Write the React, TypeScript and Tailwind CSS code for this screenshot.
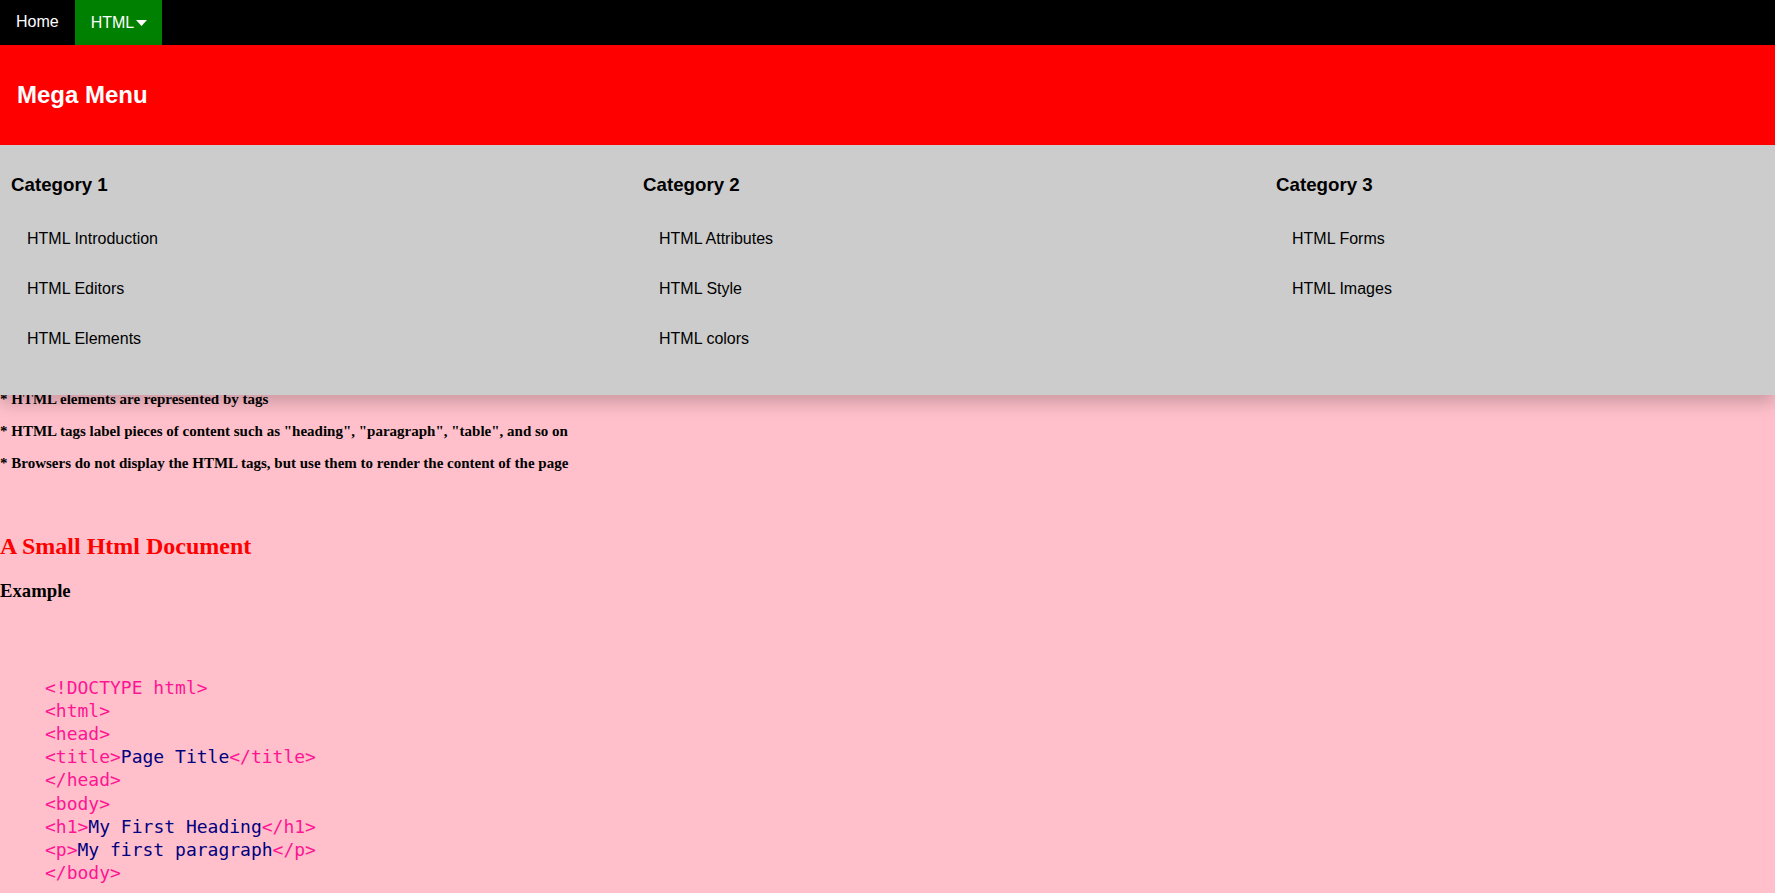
import React from "react";

// ============================================================================
// 数据
// ============================================================================

const CATEGORIES = [
  { id: 1, title: "Category 1", links: ["HTML Introduction", "HTML Editors", "HTML Elements"] },
  { id: 2, title: "Category 2", links: ["HTML Attributes", "HTML Style", "HTML colors"] },
  { id: 3, title: "Category 3", links: ["HTML Forms", "HTML Images"] },
];

const NOTES = [
  "* HTML elements are represented by tags",
  '* HTML tags label pieces of content such as "heading", "paragraph", "table", and so on',
  "* Browsers do not display the HTML tags, but use them to render the content of the page",
];

// 代码示例：[标签, 文本, 结束标签]
const CODE: [string, string?, string?][] = [
  ["<!DOCTYPE html>"],
  ["<html>"],
  ["<head>"],
  ["<title>", "Page Title", "</title>"],
  ["</head>"],
  ["<body>"],
  ["<h1>", "My First Heading", "</h1>"],
  ["<p>", "My first paragraph", "</p>"],
  ["</body>"],
];

const SANS = "font-['Liberation_Sans',Arial,sans-serif]";

// ============================================================================
// 主组件
// ============================================================================

export default function App() {
  return (
    <div className="relative min-h-screen overflow-hidden bg-[#ffc0cb]">
      {/* 顶部导航 */}
      <nav className={`flex h-[45px] bg-black text-white ${SANS}`}>
        <a className="px-4 py-[13px] text-[16px] leading-[18px]">Home</a>
        <button className="flex items-center gap-[2px] bg-[#008000] pl-4 pr-[15px] text-[16px] leading-[18px] text-white">
          HTML
          <svg width="11" height="6" viewBox="0 0 11 6" className="mt-[1px]">
            <path d="M0 0h11L5.5 6z" fill="white" />
          </svg>
        </button>
      </nav>

      {/* 下拉大菜单 */}
      <div
        className={`absolute left-0 top-[45px] z-10 w-full shadow-[0_8px_16px_0_rgba(0,0,0,0.2)] ${SANS}`}
      >
        <div className="bg-[#ff0000] px-[17px] py-4 text-white">
          <h2 className="my-[20px] text-[24px] font-bold leading-[28px]">Mega Menu</h2>
        </div>
        <div className="flex h-[250px] bg-[#cccccc] text-black">
          {CATEGORIES.map((cat) => (
            <div key={cat.id} className="w-[633px] shrink-0 p-[10px] first:pl-[11px]">
              <h3 className="my-[18.72px] text-[18.72px] font-bold leading-[21.5px]">{cat.title}</h3>
              {cat.links.map((link) => (
                <a key={link} className="block p-4 text-[16px] leading-[18px]">
                  {link}
                </a>
              ))}
            </div>
          ))}
        </div>
      </div>

      {/* 正文 */}
      <main className="pt-[346px] font-['Liberation_Serif','Times_New_Roman',serif] text-black">
        {NOTES.map((note) => (
          <p key={note} className="mb-[15px] text-[15px] font-bold leading-[17px]">
            {note}
          </p>
        ))}

        <h2 className="mt-[60px] text-[24px] font-bold leading-[28px] text-[#ff0000]">
          A Small Html Document
        </h2>
        <h3 className="mt-[20px] text-[18.72px] font-bold leading-[21.5px]">Example</h3>

        <pre className="mt-[74px] pl-[45px] font-['DejaVu_Sans_Mono','Liberation_Mono',monospace] text-[18px] leading-[23.2px]">
          {CODE.map(([open, text, close], i) => (
            <div key={i}>
              <span className="text-[#ff1493]">{open}</span>
              {text && <span className="text-[#000080]">{text}</span>}
              {close && <span className="text-[#ff1493]">{close}</span>}
            </div>
          ))}
        </pre>
      </main>
    </div>
  );
}
